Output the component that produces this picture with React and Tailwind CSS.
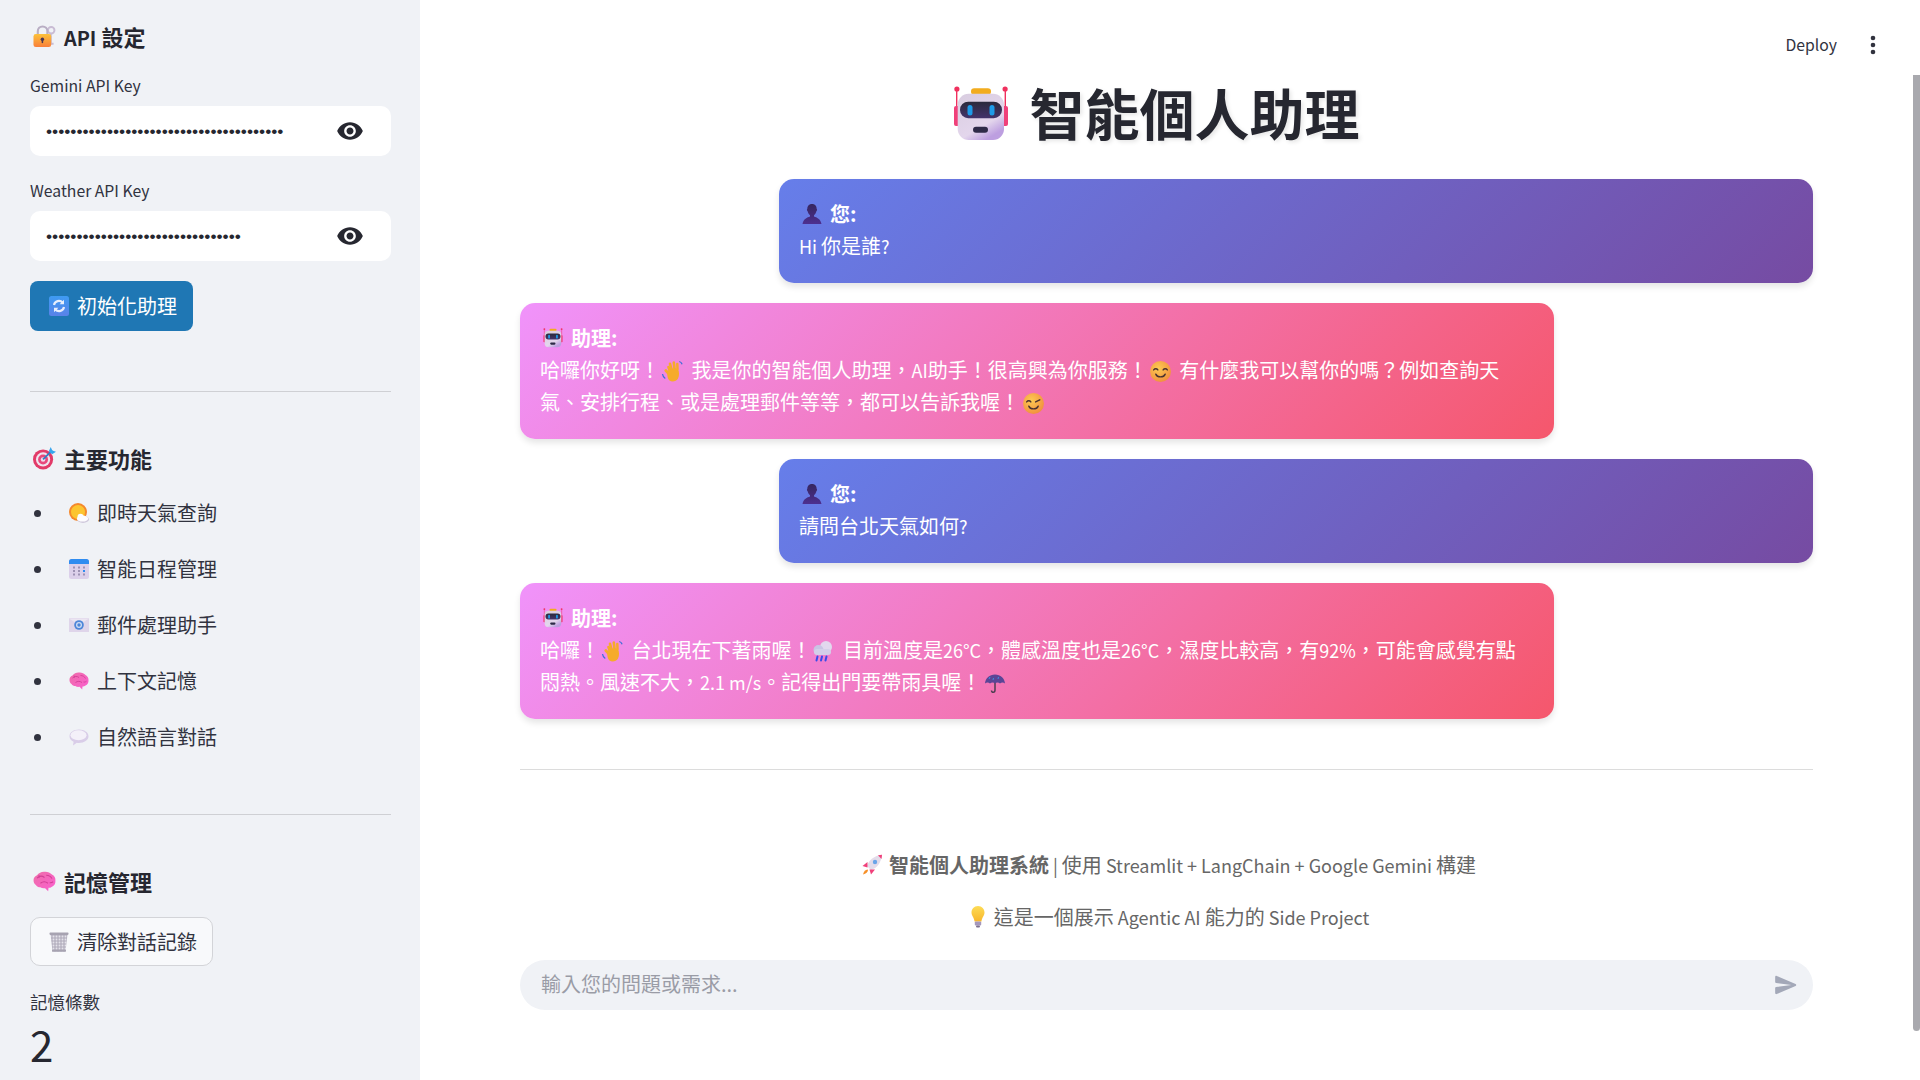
import React from "react";

const FONT = "font-['Noto_Sans_CJK_TC','Noto_Sans',sans-serif]";

// latin runs sit a bit smaller than the CJK glyphs around them
const L = ({ children }) => <span className="text-[0.9em] leading-none">{children}</span>;

// 3D-style emoji drawn by hand, the sandbox has no colour emoji font
const Robot = ({ size = 24, className = "" }) => (
  <svg width={size} height={size} viewBox="0 0 54 56" className={className}>
    <defs>
      <linearGradient id="robotHead" x1="0" y1="0" x2="0.6" y2="1">
        <stop offset="0" stopColor="#d9cde0" />
        <stop offset="0.75" stopColor="#e3d6ec" />
        <stop offset="1" stopColor="#bd9fe0" />
      </linearGradient>
      <linearGradient id="robotVisor" x1="0" y1="0" x2="0" y2="1">
        <stop offset="0" stopColor="#2a2a3c" />
        <stop offset="1" stopColor="#43336b" />
      </linearGradient>
    </defs>
    <path d="M2.7 3v20M51.3 3v20" stroke="#f0305e" strokeWidth="1.4" />
    <circle cx="2.9" cy="3" r="2.6" fill="#f0305e" />
    <circle cx="51.1" cy="3" r="2.6" fill="#f0305e" />
    <rect x="0" y="20" width="6" height="20" rx="2" fill="#f0407a" />
    <rect x="48" y="20" width="6" height="20" rx="2" fill="#f0407a" />
    <rect x="17" y="2.3" width="20" height="6.5" rx="3.2" fill="#f2ac1e" />
    <rect x="3.7" y="7.7" width="46.3" height="46.3" rx="11" fill="url(#robotHead)" />
    <rect x="6" y="15.7" width="42" height="16.5" rx="8.2" fill="url(#robotVisor)" />
    <rect x="13.5" y="19" width="5" height="10.5" rx="2.5" fill="#1e9be8" />
    <rect x="35.5" y="19" width="5" height="10.5" rx="2.5" fill="#1e9be8" />
    <rect x="19" y="40.7" width="15" height="6" rx="3" fill="#2e2a48" />
  </svg>
);

const Lock = () => (
  <svg width="23" height="23" viewBox="0 0 24 24">
    <defs>
      <linearGradient id="lockBody" x1="0" y1="0" x2="0" y2="1">
        <stop offset="0" stopColor="#fcc13a" />
        <stop offset="1" stopColor="#f97f3a" />
      </linearGradient>
    </defs>
    <circle cx="19" cy="5.5" r="3.4" fill="none" stroke="#c9bcd4" strokeWidth="2" />
    <path d="M18.5 8.5v11h3" fill="none" stroke="#c9bcd4" strokeWidth="2.2" />
    <path d="M5 11V6.5a5 5 0 0 1 10 0V11" fill="none" stroke="#b9aec4" strokeWidth="2.2" />
    <rect x="0.5" y="9.5" width="18.5" height="13.5" rx="2.5" fill="url(#lockBody)" />
    <circle cx="9.8" cy="14.8" r="1.8" fill="#4a3550" />
    <rect x="9" y="15" width="1.6" height="4" rx="0.8" fill="#4a3550" />
  </svg>
);

const Refresh = () => (
  <svg width="20" height="20" viewBox="0 0 20 20">
    <defs>
      <linearGradient id="refreshBg" x1="0" y1="0" x2="0" y2="1">
        <stop offset="0" stopColor="#3e9bf3" />
        <stop offset="1" stopColor="#5a82e8" />
      </linearGradient>
    </defs>
    <rect width="20" height="20" rx="2.5" fill="url(#refreshBg)" />
    <path d="M5 9a5 5 0 0 1 8.6-2.4M15 11a5 5 0 0 1-8.6 2.4" fill="none" stroke="#e8eefc" strokeWidth="2.2" />
    <path d="M15 3.8v4.4h-4.4zM5 16.2v-4.4h4.4z" fill="#e8eefc" />
  </svg>
);

const Target = () => (
  <svg width="23" height="23" viewBox="0 0 24 24">
    <circle cx="10.5" cy="13" r="10.5" fill="#e23a68" />
    <circle cx="10.5" cy="13" r="7.4" fill="#f0e4ee" />
    <circle cx="10.5" cy="13" r="5.2" fill="#e8487c" />
    <circle cx="10.5" cy="13" r="2.4" fill="#eedcea" />
    <path d="M10.5 13 20 3.5" stroke="#2f7fc4" strokeWidth="1.8" />
    <path d="M16.5 4.5 18.5 0l1.6 3.6L24 5l-4 2.6z" fill="#38a6ee" />
  </svg>
);

const SunCloud = () => (
  <svg width="20" height="20" viewBox="0 0 20 20">
    <circle cx="9" cy="9" r="9" fill="#f5882c" />
    <circle cx="9" cy="9" r="7" fill="#fcc530" />
    <ellipse cx="14" cy="16.3" rx="6" ry="3.6" fill="#cfc8dc" />
    <ellipse cx="13.5" cy="15.6" rx="5.6" ry="3" fill="#fdfcfe" />
    <circle cx="11.5" cy="13.8" r="3" fill="#fdfcfe" />
  </svg>
);

const Calendar = () => (
  <svg width="20" height="20" viewBox="0 0 20 20">
    <rect width="20" height="20" rx="2.5" fill="#dcd0ea" />
    <path d="M0 5V2.5A2.5 2.5 0 0 1 2.5 0h15A2.5 2.5 0 0 1 20 2.5V5z" fill="#2f8cf0" />
    <g fill="#9d92b4">
      <rect x="4" y="7.5" width="2" height="2" />
      <rect x="9" y="7.5" width="2" height="2" />
      <rect x="14" y="7.5" width="2" height="2" />
      <rect x="4" y="11" width="2" height="2" />
      <rect x="9" y="11" width="2" height="2" />
      <rect x="4" y="14.5" width="2" height="2" />
      <rect x="9" y="14.5" width="2" height="2" />
      <rect x="14" y="14.5" width="2" height="2" />
    </g>
    <rect x="14" y="11" width="2" height="2" fill="#2f8cf0" />
  </svg>
);

const Mail = () => (
  <svg width="20" height="20" viewBox="0 0 20 20">
    <rect y="3" width="20" height="14" rx="0.5" fill="#dfd5ea" />
    <path d="M0 3.500 10 10 20 3.500" fill="#ebe5f1" />
    <circle cx="10" cy="10" r="4.800" fill="#4d86d8" />
    <circle cx="10" cy="10" r="3" fill="#cfdcf3" />
    <circle cx="10" cy="10" r="1.700" fill="#4d86d8" />
  </svg>
);

const Brain = ({ size = 20 }) => (
  <svg width={size} height={size} viewBox="0 0 20 20">
    <defs>
      <linearGradient id="brainFill" x1="0" y1="0" x2="1" y2="1">
        <stop offset="0" stopColor="#ee6ea8" />
        <stop offset="1" stopColor="#fb5fd0" />
      </linearGradient>
    </defs>
    <path d="M.5 8.500c0-2 1.500-3.500 3-4C5 2.500 7.500 1.300 10 1.500c2.300-.3 5 .7 6.500 2.500 2 1 3.300 3 3 5.500.2 2.200-1 4.300-3 5-1 .8-2 1-3 1l-.3 3-2.700-2.700c-1.500.3-3 0-4.200-.8-1.500 0-3-.5-3.800-2C1 12 .3 10.300.5 8.500z" fill="url(#brainFill)" />
    <path d="M3.500 7c2-2 4.500-2 6.500-.5M6.500 11.500c2-1.500 4.500-1.500 6.500 0M11.500 4.500c2.200 0 4 1 5 3M14.500 11c1 .2 2 0 3-.8M5 4.500c.5 1 .5 1.500.3 2.300" fill="none" stroke="#d23f96" strokeWidth="0.9" />
  </svg>
);

const Speech = () => (
  <svg width="20" height="20" viewBox="0 0 20 20">
    <path d="M10 2.500c5.200 0 9.500 2.800 9.500 6.700s-4.300 6.700-9.500 6.700c-.8 0-1.500-.1-2.200-.2L4 18.500l.6-3.800C2 13.500.5 11.500.5 9.200.5 5.300 4.800 2.500 10 2.500z" fill="#d9cde8" />
    <ellipse cx="9.500" cy="8.300" rx="8" ry="5" fill="#f4f0f9" />
  </svg>
);

const Trash = () => (
  <svg width="20" height="20" viewBox="0 0 20 20">
    <defs>
      <pattern id="trashMesh" width="3" height="3" patternUnits="userSpaceOnUse">
        <rect width="3" height="3" fill="#b8b4c2" />
        <circle cx="1.500" cy="1.500" r="0.9" fill="#e4e2ea" />
      </pattern>
    </defs>
    <path d="M1.500 2.500h17L16.500 19.500h-13z" fill="url(#trashMesh)" />
    <rect x="0.500" y="0.500" width="19" height="2.400" rx="0.8" fill="#a7a3b1" />
    <rect x="3" y="17.800" width="14" height="1.900" rx="0.6" fill="#a7a3b1" />
  </svg>
);

const Person = () => (
  <svg width="20" height="20" viewBox="0 0 20 20">
    <defs>
      <linearGradient id="personFill" x1="0" y1="0" x2="0" y2="1">
        <stop offset="0" stopColor="#35265e" />
        <stop offset="1" stopColor="#4d2f90" />
      </linearGradient>
    </defs>
    <path d="M10 0c3.200 0 4.700 2.200 4.700 5 .5.200.6 1.500-.3 2.200-.5 2-1.400 3.300-2.400 4v1.300c2.800 1 6.500 2.300 7.500 7.500H.5c1-5.200 4.700-6.500 7.500-7.500v-1.300c-1-.7-1.900-2-2.400-4-.9-.7-.8-2-.3-2.200C5.300 2.200 6.800 0 10 0z" fill="url(#personFill)" />
  </svg>
);

const Wave = () => (
  <svg width="22" height="22" viewBox="0 0 22 22" className="ml-[1px] mr-[4px] inline-block align-[-4px]">
    <g stroke="#f6ab2a" strokeLinecap="round" fill="none">
      <path d="M8.500 10 7.500 7" strokeWidth="2.600" />
      <path d="M10.500 9 9 3.800" strokeWidth="2.600" />
      <path d="M13.500 8.500 12.800 2.500" strokeWidth="2.600" />
      <path d="M16.500 9 16.300 4" strokeWidth="2.500" />
      <path d="M8 14 4.800 10.500" strokeWidth="2.800" />
    </g>
    <path d="M7 11c2-2.500 7-3.500 10-2 1.300 2.500 1.500 6.500 0 9.500-1.500 3-6 4-8.500 2C6.500 19 5.500 14 7 11z" fill="#f6ab2a" />
    <path d="M1.500 14c.3 2 1.200 3.500 2.800 4.500M18.300 1.500c1.300.4 2.300 1.300 2.800 2.800" fill="none" stroke="#3d6fd8" strokeWidth="1.300" />
  </svg>
);

const Face = ({ wink }) => (
  <svg
    width="21"
    height="21"
    viewBox="0 0 20 20"
    className={wink ? "ml-[3px] inline-block align-[-4px]" : "ml-[2px] mr-[4px] inline-block align-[-4px]"}
  >
    <defs>
      <radialGradient id="faceFill" cx="0.4" cy="0.35" r="0.75">
        <stop offset="0" stopColor="#fdca52" />
        <stop offset="1" stopColor="#f08a3c" />
      </radialGradient>
    </defs>
    <circle cx="10" cy="10" r="10" fill="url(#faceFill)" />
    <g fill="none" stroke="#4a3230" strokeWidth="1.300" strokeLinecap="round">
      <path d="M3.500 8.500c1-1.500 3-1.500 4 0" />
      {wink ? <path d="M12 8.500l4-2" /> : <path d="M12.500 8.500c1-1.500 3-1.500 4 0" />}
      <path d="M5.500 12.500c1.500 3.500 7.500 3.500 9 0" />
    </g>
  </svg>
);

const Rain = () => (
  <svg width="22" height="22" viewBox="0 0 22 22" className="mr-[5px] inline-block align-[-4px]">
    <circle cx="15" cy="7" r="6" fill="#e2d8ee" />
    <circle cx="7.500" cy="10" r="5" fill="#c9c4e4" />
    <rect x="3" y="9" width="17" height="6" rx="3" fill="#d4cfe9" />
    <path d="M6.500 16.500 5.500 20.500M11 16.500l-1 4M15.500 16.500l-1 4" stroke="#3a4ce8" strokeWidth="2" strokeLinecap="round" />
  </svg>
);

const Umbrella = () => (
  <svg width="22" height="22" viewBox="0 0 22 22" className="ml-[3px] inline-block align-[-4px]">
    <path d="M11 3v15c0 3-3.500 3-3.500.5" fill="none" stroke="#4d3e50" strokeWidth="1.500" />
    <path d="M1 11.500C1.500 6 5.500 2.500 11 2.500s9.500 3.500 10 9c-1.700-1.300-3.400-1.300-5 0-1.500-1.300-3.500-1.300-5 0-1.500-1.300-3.500-1.300-5 0-1.600-1.300-3.300-1.300-5 0z" fill="#5a4596" />
    <path d="M5 7 6 5M9 8l.5-2M14 7l.5-2" stroke="#3f8fe0" strokeWidth="1" />
  </svg>
);

const Rocket = () => (
  <svg width="22" height="22" viewBox="0 0 22 22">
    <path d="M6 12C8 6 13 1.800 21 .8 20 9 16 14 10 16z" fill="#e3dcea" />
    <path d="M17 1.300 21 .8 20.500 5z" fill="#f0407a" />
    <circle cx="14" cy="8" r="2.200" fill="#6aa4e8" />
    <path d="M6.500 8 1.500 12l5 1.500zM14 15.500l-4 5-1.500-5z" fill="#f0407a" />
    <path d="M6.500 15.500c-2 .2-3.800 1.800-4.500 5 3.200-.7 4.800-2.500 5-4.500z" fill="#f79028" />
  </svg>
);

const Bulb = () => (
  <svg width="20" height="22" viewBox="0 0 20 22">
    <defs>
      <linearGradient id="bulbFill" x1="0" y1="0" x2="0" y2="1">
        <stop offset="0" stopColor="#fddc56" />
        <stop offset="1" stopColor="#f8b62c" />
      </linearGradient>
    </defs>
    <path d="M10 0c4 0 6.500 3 6.500 6.500 0 3.500-2.700 5-3 9h-7c-.3-4-3-5.500-3-9C3.500 3 6 0 10 0z" fill="url(#bulbFill)" />
    <rect x="6.800" y="15.500" width="6.400" height="4" rx="1" fill="#a598bc" />
    <rect x="8" y="19.500" width="4" height="2" rx="1" fill="#7d7190" />
  </svg>
);

const EyeIcon = () => (
  <svg width="28" height="28" viewBox="0 0 24 24" fill="#262730">
    <path d="M12 4.500C7 4.500 2.730 7.610 1 12c1.730 4.390 6 7.500 11 7.500s9.270-3.110 11-7.500c-1.730-4.390-6-7.500-11-7.500zM12 17c-2.760 0-5-2.240-5-5s2.240-5 5-5 5 2.240 5 5-2.240 5-5 5zm0-8c-1.660 0-3 1.340-3 3s1.340 3 3 3 3-1.340 3-3-1.340-3-3-3z" />
  </svg>
);

const SectionTitle = ({ icon, children }) => (
  <h3 className="flex items-center gap-2 pl-[3px] text-[22px] leading-[32px] font-bold text-[#262730]">
    {icon}
    <span>{children}</span>
  </h3>
);

const KeyField = ({ label, dots, className = "" }) => (
  <div className={className}>
    <label className="block text-[15.75px] leading-[24px] text-[#31333f]">{label}</label>
    <div className="mt-2 flex h-[50px] items-center rounded-[10px] bg-white pl-4 pr-[27px]">
      <input
        type="password"
        readOnly
        value={"x".repeat(dots)}
        className="min-w-0 flex-1 bg-transparent font-['Liberation_Sans'] text-[17.4px] text-[#262730] outline-none"
      />
      <EyeIcon />
    </div>
  </div>
);

const features = [
  { icon: <SunCloud />, text: "即時天氣查詢" },
  { icon: <Calendar />, text: "智能日程管理" },
  { icon: <Mail />, text: "郵件處理助手" },
  { icon: <Brain />, text: "上下文記憶" },
  { icon: <Speech />, text: "自然語言對話" },
];

const Bubble = ({ from, children }) => {
  const isUser = from === "user";
  return (
    <div
      className={
        isUser
          ? "mb-5 ml-auto w-[1034px] rounded-[15px] bg-[linear-gradient(135deg,#667eea_0%,#764ba2_100%)] px-5 pb-[21px] pt-[19px] text-[20px] leading-[32px] text-white shadow-[0_4px_6px_rgba(0,0,0,0.1)]"
          : "mb-5 mr-auto w-[1034px] rounded-[15px] bg-[linear-gradient(135deg,#f093fb_0%,#f5576c_100%)] px-5 pb-[21px] pt-[19px] text-[20px] leading-[32px] text-white shadow-[0_4px_6px_rgba(0,0,0,0.1)]"
      }
    >
      <div className="flex items-center gap-2 pl-[3px] font-bold">
        {isUser ? <Person /> : <Robot size={20} />}
        <span>{isUser ? "您:" : "助理:"}</span>
      </div>
      <div>{children}</div>
    </div>
  );
};

const App = () => {
  return (
    <div className={`relative flex h-screen w-full overflow-hidden bg-white ${FONT}`}>
      {/* Sidebar */}
      <aside className="w-[420px] shrink-0 overflow-hidden bg-[#f0f2f6] pl-[30px] pr-[29px] pt-5">
        <SectionTitle icon={<Lock />}>
          <L>API</L> 設定
        </SectionTitle>
        <KeyField label="Gemini API Key" dots={39} className="mt-[22px]" />
        <KeyField label="Weather API Key" dots={32} className="mt-[23px]" />
        <button className="mt-5 flex h-[50px] items-center gap-2 rounded-[8px] bg-[#1f77b4] pl-[19px] pr-4 text-[20px] text-white">
          <Refresh />
          初始化助理
        </button>
        <hr className="mt-[60px] border-t border-[#cfd0d4]" />

        <div className="mt-[50px]">
          <SectionTitle icon={<Target />}>主要功能</SectionTitle>
        </div>
        <ul className="mt-[23px] flex flex-col gap-6">
          {features.map((item) => (
            <li key={item.text} className="flex h-8 items-center text-[20px] text-[#31333f]">
              <span className="ml-[4px] h-[7px] w-[7px] rounded-full bg-[#31333f]" />
              <span className="ml-[28px] mr-2 flex">{item.icon}</span>
              {item.text}
            </li>
          ))}
        </ul>
        <hr className="mt-[61px] border-t border-[#cfd0d4]" />

        <div className="mt-[50px]">
          <SectionTitle icon={<Brain size={23} />}>記憶管理</SectionTitle>
        </div>
        <button className="mt-5 flex h-[49px] items-center gap-2 rounded-[10px] border border-[#d3d4d8] bg-[#f8f9fb] pl-[18px] pr-[15px] text-[20px] text-[#31333f]">
          <Trash />
          清除對話記錄
        </button>
        <div className="mt-[24px] text-[17.5px] leading-[24px] text-[#31333f]">記憶條數</div>
        <div className="mt-[2px] text-[42px] leading-[56px] text-[#262730]">2</div>
      </aside>

      {/* Main column */}
      <main className="min-w-0 flex-1 pt-[72px] pl-[100px] pr-[107px]">
        <h1 className="mb-[23px] flex h-[84px] items-center justify-center pr-[20px] text-[55px] font-bold text-[#262730] [text-shadow:2px_2px_4px_rgba(0,0,0,0.1)]">
          <Robot size={56} className="mr-[20px]" />
          <span className="pb-[5px]">智能個人助理</span>
        </h1>

        <Bubble from="user">
          <L>Hi </L>你是誰<L>?</L>
        </Bubble>
        <Bubble from="assistant">
          哈囉你好呀！<Wave /> 我是你的智能個人助理，<L>AI</L>助手！很高興為你服務！<Face /> 有什麼我可以幫你的嗎？例如查詢天氣、安排行程、或是處理郵件等等，都可以告訴我喔！<Face wink />
        </Bubble>
        <Bubble from="user">
          請問台北天氣如何<L>?</L>
        </Bubble>
        <Bubble from="assistant">
          哈囉！<Wave /> 台北現在下著雨喔！<Rain /> 目前溫度是<L>26°C</L>，體感溫度也是<L>26°C</L>，濕度比較高，有<L>92%</L>，可能會感覺有點悶熱。風速不大，<L>2.1 m/s</L>。記得出門要帶雨具喔！<Umbrella />
        </Bubble>

        <hr className="mt-[50px] border-t border-[#dcdcdc]" />

        <div className="mt-[79px] pl-[4px] text-center text-[20px] leading-[32px] text-[#666666]">
          <p className="flex items-center justify-center gap-[6px]">
            <Rocket />
            <span>
              <strong>智能個人助理系統</strong>
              <L> | </L>使用<L> Streamlit + LangChain + Google Gemini </L>構建
            </span>
          </p>
          <p className="mt-5 flex items-center justify-center gap-[6px]">
            <Bulb />
            <span>
              這是一個展示<L> Agentic AI </L>能力的<L> Side Project</L>
            </span>
          </p>
        </div>

        <div className="mt-[27px] flex h-[50px] items-center rounded-[25px] bg-[#f0f2f6] pl-[21px] pr-[14px]">
          <input
            readOnly
            placeholder="輸入您的問題或需求..."
            className="min-w-0 flex-1 bg-transparent pb-[2px] text-[20px] outline-none placeholder:text-[#9a9ca6]"
          />
          <svg width="26" height="26" viewBox="0 0 24 24" fill="#a3a8b8">
            <path d="M3.400 20.400l17.450-7.480c.81-.35.81-1.490 0-1.840L3.400 3.600c-.66-.29-1.390.2-1.390.91L2 9.120c0 .5.37.93.87.99L17 12 2.870 13.880c-.5.07-.87.5-.87 1l.01 4.610c0 .71.73 1.200 1.390.91z" />
          </svg>
        </div>
      </main>

      {/* Toolbar over the page */}
      <div className="absolute right-[35px] top-[33px] flex items-center gap-[24px] text-[15.75px] leading-[24px] text-[#31333f]">
        <span>Deploy</span>
        <svg width="24" height="24" viewBox="0 0 24 24" fill="#31333f">
          <circle cx="12" cy="5" r="2.300" />
          <circle cx="12" cy="12" r="2.300" />
          <circle cx="12" cy="19" r="2.300" />
        </svg>
      </div>

      {/* Scrollbar thumb */}
      <div className="absolute right-0 top-[75px] h-[956px] w-[7px] rounded-b-[4px] bg-[#a9a9ae]" />
    </div>
  );
};

export default App;
